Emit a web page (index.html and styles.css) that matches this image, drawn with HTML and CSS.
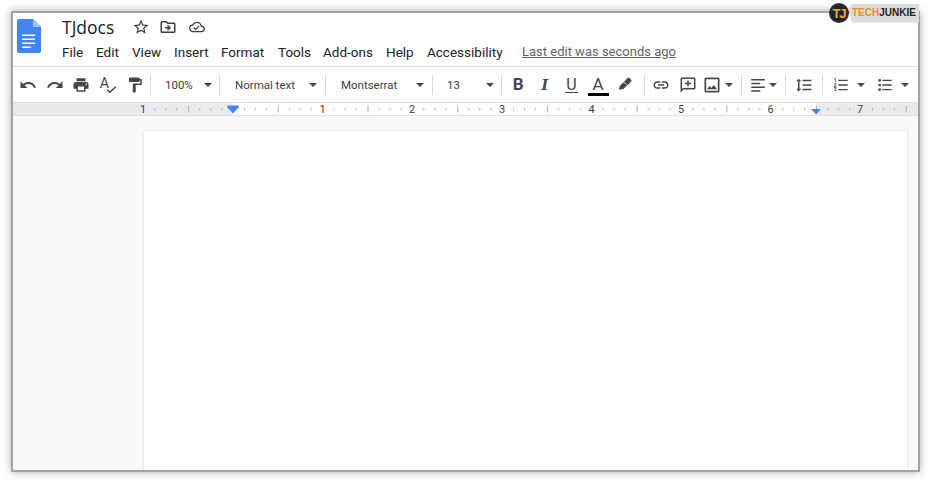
FILE: index.html
```html
<!DOCTYPE html>
<html lang="en">
<head>
<meta charset="utf-8">
<title>TJdocs</title>
<link rel="stylesheet" href="styles.css">
</head>
<body>
<div class="frame">
  <div class="badge">
    <div class="badge-logo"><span>TJ</span></div>
    <div class="badge-tag"><span class="orange">TECH</span>JUNKIE</div>
  </div>
  <header class="header">
    <svg class="doc-icon" viewBox="0 0 24 34">
      <path fill="#4285f4" d="M2 0h14l8 8v24a2 2 0 0 1-2 2H2a2 2 0 0 1-2-2V2a2 2 0 0 1 2-2z"/>
      <path fill="#a1c2fa" d="M16 0l8 8h-8z"/>
      <path fill="#fff" d="M5 15.500h13V17H5zM5 19.500h13V21H5zM5 23.500h13V25H5zM5 27.500h9V29H5z"/>
    </svg>
    <div class="head-col">
      <div class="title-row">
        <span class="title">TJdocs</span>
        <svg class="ticon" viewBox="0 0 24 24"><path d="M22 9.240l-7.190-.62L12 2 9.190 8.630 2 9.240l5.460 4.730L5.820 21 12 17.270 18.180 21l-1.630-7.030L22 9.240zM12 15.400l-3.760 2.270 1-4.280-3.320-2.880 4.380-.38L12 6.100l1.710 4.040 4.380.38-3.320 2.880 1 4.280L12 15.400z"/></svg>
        <svg class="ticon ticon-folder" viewBox="0 0 24 24"><path d="M20 6h-8l-2-2H4c-1.100 0-2 .9-2 2v12c0 1.100.9 2 2 2h16c1.100 0 2-.9 2-2V8c0-1.100-.9-2-2-2zm0 12H4V6h5.170l2 2H20v10zm-8.010-9l-1.410 1.410L12.160 12H8v2h4.160l-1.590 1.590L11.990 17 16 13.010 11.990 9z"/></svg>
        <svg class="ticon ticon-cloud" viewBox="0 0 24 24"><path d="M19.350 10.040C18.670 6.590 15.640 4 12 4 9.110 4 6.600 5.640 5.350 8.040 2.340 8.360 0 10.910 0 14c0 3.310 2.690 6 6 6h13c2.760 0 5-2.240 5-5 0-2.640-2.050-4.780-4.650-4.960zM19 18H6c-2.210 0-4-1.790-4-4 0-2.050 1.530-3.760 3.560-3.970l1.070-.11.5-.95C8.080 7.140 9.940 6 12 6c2.620 0 4.880 1.860 5.390 4.430l.3 1.500 1.530.11c1.560.1 2.780 1.410 2.780 2.960 0 1.650-1.350 3-3 3zm-9-3.820l-2.090-2.090L6.500 13.500 10 17l6.010-6.010-1.410-1.410z"/></svg>
      </div>
      <nav class="menu">
        <span class="m-file">File</span>
        <span class="m-edit">Edit</span>
        <span class="m-view">View</span>
        <span class="m-insert">Insert</span>
        <span class="m-format">Format</span>
        <span class="m-tools">Tools</span>
        <span class="m-addons">Add-ons</span>
        <span class="m-help">Help</span>
        <span class="m-access">Accessibility</span>
        <span class="last-edit">Last edit was seconds ago</span>
      </nav>
    </div>
  </header>

  <div class="toolbar">
    <div class="btn"><svg class="icon" viewBox="0 0 24 24"><path d="M12.500 8c-2.650 0-5.050.99-6.900 2.600L2 7v9h9l-3.620-3.620c1.390-1.160 3.160-1.880 5.120-1.880 3.540 0 6.550 2.310 7.600 5.500l2.370-.78C21.080 11.030 17.150 8 12.500 8z"/></svg></div>
    <div class="btn"><svg class="icon" viewBox="0 0 24 24"><path d="M18.400 10.600C16.550 8.990 14.150 8 11.500 8c-4.650 0-8.580 3.030-9.960 7.220L3.900 16c1.050-3.190 4.050-5.500 7.600-5.500 1.950 0 3.730.72 5.120 1.880L13 16h9V7l-3.600 3.600z"/></svg></div>
    <div class="btn"><svg class="icon" viewBox="0 0 24 24"><path d="M19 8H5c-1.660 0-3 1.340-3 3v6h4v4h12v-4h4v-6c0-1.660-1.340-3-3-3zm-3 11H8v-5h8v5zm3-7c-.55 0-1-.45-1-1s.45-1 1-1 1 .45 1 1-.45 1-1 1zm-1-9H6v4h12V3z"/></svg></div>
    <div class="btn"><svg class="icon" viewBox="0 0 24 24"><text class="svg-letter" x="1" y="16" font-size="19">A</text><path d="M21.590 13.590l-7.090 6.590L11.830 17.500l-1.410 1.410 4.090 4.090L23 15z"/></svg></div>
    <div class="btn"><svg class="icon" viewBox="0 0 24 24"><path d="M18 4V3c0-.55-.45-1-1-1H5c-.55 0-1 .45-1 1v4c0 .55.45 1 1 1h12c.55 0 1-.45 1-1V6h1v4H9v11c0 .55.45 1 1 1h2c.55 0 1-.45 1-1v-9h8V4h-3z"/></svg></div>
    <div class="sep sep-first"></div>

    <div class="drop drop-zoom"><span>100%</span><i class="caret"></i></div>
    <div class="sep"></div>
    <div class="drop drop-style"><span>Normal text</span><i class="caret"></i></div>
    <div class="sep"></div>
    <div class="drop drop-font"><span>Montserrat</span><i class="caret"></i></div>
    <div class="sep"></div>
    <div class="drop drop-size"><span>13</span><i class="caret"></i></div>
    <div class="sep"></div>

    <div class="btn after-sep"><b class="fmt fmt-b">B</b></div>
    <div class="btn"><i class="fmt fmt-i">I</i></div>
    <div class="btn"><span class="fmt fmt-u">U</span></div>
    <div class="btn"><span class="fmt fmt-a">A</span></div>
    <div class="btn"><svg class="icon icon-hl" viewBox="0 0 24 24"><path d="M18.500 1.150c-.53 0-1.040.19-1.430.58l-5.810 5.820 5.650 5.650 5.820-5.810c.77-.78.77-2.040 0-2.830l-2.840-2.830c-.39-.39-.89-.58-1.390-.58zM10.300 8.500l-5.960 5.960c-.78.78-.78 2.040.02 2.850-1.220 1.230-2.360 2.360-2.360 2.360L6.630 20l.87-.87c.78.78 2.050.78 2.830 0l5.960-5.960L10.300 8.500z"/></svg></div>
    <div class="sep sep-hl"></div>

    <div class="btn after-sep"><svg class="icon" viewBox="0 0 24 24"><path d="M3.900 12c0-1.710 1.390-3.100 3.100-3.100h4V7H7c-2.760 0-5 2.240-5 5s2.240 5 5 5h4v-1.900H7c-1.710 0-3.100-1.390-3.100-3.100zM8 13h8v-2H8v2zm9-6h-4v1.900h4c1.710 0 3.100 1.390 3.100 3.100s-1.390 3.100-3.100 3.100h-4V17h4c2.760 0 5-2.240 5-5s-2.240-5-5-5z"/></svg></div>
    <div class="btn"><svg class="icon" viewBox="0 0 24 24"><path d="M20 2H4c-1.100 0-2 .9-2 2v18l4-4h14c1.100 0 2-.9 2-2V4c0-1.100-.9-2-2-2zm0 14H5.170L4 17.170V4h16v12zM11 14h2v-3h3V9h-3V6h-2v3H8v2h3z"/></svg></div>
    <div class="btn btn-narrow"><svg class="icon icon-img" viewBox="0 0 24 24"><path d="M19 5v14H5V5h14m0-2H5c-1.100 0-2 .9-2 2v14c0 1.100.9 2 2 2h14c1.100 0 2-.9 2-2V5c0-1.100-.9-2-2-2zm-4.860 8.860l-3 3.870L9 13.140 6 17h12l-3.860-5.140z"/></svg></div>
    <i class="caret caret-tight"></i>
    <div class="sep sep-img"></div>

    <div class="btn btn-narrow after-align"><svg class="icon" viewBox="0 0 24 24"><path d="M3 4h18v2H3zM3 9h12v2H3zM3 14h18v2H3zM3 19h12v2H3z"/></svg></div>
    <i class="caret"></i>
    <div class="sep sep-align"></div>

    <div class="btn after-align-sep"><svg class="icon" viewBox="0 0 24 24"><path d="M6 7h2.500L5 3.500 1.500 7H4v10H1.500L5 20.500 8.500 17H6V7zm4-2v2h12V5H10zm0 14h12v-2H10v2zm0-6h12v-2H10v2z"/></svg></div>
    <div class="sep sep-line"></div>

    <div class="btn after-line-sep"><svg class="icon icon-list" viewBox="0 0 24 24"><text class="svg-digit" x="1" y="7.500">1</text><text class="svg-digit" x="1" y="14.500">2</text><text class="svg-digit" x="1" y="21.500">3</text><path d="M8 4h14v2H8zM8 11h14v2H8zM8 18h14v2H8z"/></svg></div>
    <i class="caret caret-list"></i>
    <div class="btn after-num"><svg class="icon icon-list" viewBox="0 0 24 24"><circle cx="4" cy="5" r="2"/><circle cx="4" cy="12" r="2"/><circle cx="4" cy="19" r="2"/><path d="M8 4h14v2H8zM8 11h14v2H8zM8 18h14v2H8z"/></svg></div>
    <i class="caret caret-list"></i>
  </div>

  <svg class="ruler" viewBox="-1 0 905 12" width="905" height="12">
    <defs>
      <pattern id="ticks" x="129.300" y="0" width="89.700" height="12" patternUnits="userSpaceOnUse">
        <rect x="11" y="5" width="1" height="2.500" fill="#b4b8bc"/>
        <rect x="22" y="5" width="1" height="2.500" fill="#b4b8bc"/>
        <rect x="33" y="5" width="1" height="2.500" fill="#b4b8bc"/>
        <rect x="44.800" y="2.500" width="1" height="7" fill="#a8acb0"/>
        <rect x="56" y="5" width="1" height="2.500" fill="#b4b8bc"/>
        <rect x="67" y="5" width="1" height="2.500" fill="#b4b8bc"/>
        <rect x="78" y="5" width="1" height="2.500" fill="#b4b8bc"/>
      </pattern>
    </defs>
    <rect x="-1" width="905" height="12" fill="#fff"/>
    <rect x="-1" width="220" height="12" fill="#e8eaed"/>
    <rect x="802" width="102" height="12" fill="#e8eaed"/>
    <rect x="129" width="764" height="12" fill="url(#ticks)"/>
    <g class="ruler-nums">
      <text x="129" y="10">1</text>
      <text x="308.500" y="10">1</text>
      <text x="398" y="10">2</text>
      <text x="488" y="10">3</text>
      <text x="577.500" y="10">4</text>
      <text x="667" y="10">5</text>
      <text x="756.500" y="10">6</text>
      <text x="846" y="10">7</text>
    </g>
    <path fill="#4285f4" d="M213.500 2.500h11v3h-1l-4.500 5-4.500-5h-1z"/>
    <path fill="#4285f4" d="M797 6h10l-5 5.500z"/>
  </svg>

  <main class="canvas">
    <div class="page"></div>
  </main>
</div>
</body>
</html>
```

FILE: styles.css
```css
* { box-sizing: border-box; }

html, body {
  margin: 0;
  height: 100%;
  background: #fff;
  overflow: hidden;
}

body {
  font-family: Roboto, "Liberation Sans", sans-serif;
  color: #202124;
}

.frame {
  position: relative;
  display: flex;
  flex-direction: column;
  width: 909px;
  height: 461px;
  margin: 11px 0 0 11px;
  border: 2px solid #a2a2a2;
  background: #fff;
  box-shadow: 0 0 8px rgba(0, 0, 0, .32);
}

/* Watermark */
.badge {
  position: absolute;
  top: -10px;
  right: -1px;
  display: flex;
  align-items: center;
  height: 20px;
}

.badge-logo {
  position: relative;
  z-index: 1;
  display: flex;
  align-items: center;
  justify-content: center;
  width: 20px;
  height: 20px;
  border-radius: 50%;
  background: #20242a;
  border: 2px solid #2b2b2b;
}

.badge-logo span {
  color: #f2b01e;
  font: 700 13px/1 "Liberation Sans", sans-serif;
  letter-spacing: -1px;
}

.badge-tag {
  display: flex;
  align-items: center;
  width: 70px;
  height: 19px;
  padding-left: 3px;
  background: #dcdcdc;
  clip-path: polygon(3px 0, 100% 0, 100% 100%, 3px 100%, 0 50%);
  color: #1c1c1c;
  font: 700 10px/1 "Liberation Sans", sans-serif;
}

.orange { color: #ee8f0f; }

/* Header */
.header {
  display: flex;
  flex: none;
  height: 53px;
  border-bottom: 1px solid #e0e0e0;
  box-sizing: content-box;
}

.doc-icon {
  flex: none;
  width: 24px;
  height: 34px;
  margin: 6px 0 0 4px;
}

.head-col {
  margin-left: 21px;
  flex: 1;
}

.title-row {
  display: flex;
  align-items: center;
  height: 27px;
}

.title {
  width: 70px;
  font-family: "Open Sans", Roboto, sans-serif;
  font-size: 17.500px;
  color: #202124;
}

.ticon {
  width: 18px;
  height: 18px;
  margin-right: 9px;
  fill: #3c4043;
}

.ticon-folder { margin-right: 12px; }
.ticon-cloud { width: 16px; height: 16px; }

.menu {
  display: flex;
  align-items: center;
  height: 23px;
  font-size: 13.500px;
  white-space: nowrap;
  color: #202124;
}

.m-file { width: 34px; }
.m-edit { width: 36px; }
.m-view { width: 42px; }
.m-insert { width: 47px; }
.m-format { width: 57px; }
.m-tools { width: 45px; }
.m-addons { width: 63px; }
.m-help { width: 41px; }
.m-access { width: 95px; }

.last-edit {
  font-size: 13px;
  color: #5f6368;
  text-decoration: underline;
}

/* Toolbar */
.toolbar {
  display: flex;
  flex: none;
  align-items: center;
  height: 36px;
  padding-left: 2px;
  border-bottom: 1px solid #e0e0e0;
  color: #444746;
}

.btn {
  display: flex;
  flex: none;
  align-items: center;
  justify-content: center;
  width: 26.600px;
  height: 100%;
}

.btn-narrow { width: 22px; }

.icon {
  width: 18px;
  height: 18px;
  fill: #444746;
}

.icon-img { width: 20px; height: 20px; }
.icon-hl { width: 15px; height: 15px; }
.icon-list { width: 16px; height: 16px; }

.svg-letter {
  font-family: Roboto, sans-serif;
  fill: #444746;
}

.svg-digit {
  font: 700 7.500px Roboto, sans-serif;
  fill: #444746;
}

.sep {
  flex: none;
  width: 1px;
  height: 20px;
  background: #dadce0;
}

.sep-first { margin-left: 2px; }
.sep-hl { margin-left: 6px; }
.sep-img { margin-left: 8px; }
.sep-align { margin-left: 8px; }
.sep-line { margin-left: 4.400px; }

.after-sep { margin-left: 3px; }
.after-align { margin-left: 5px; }
.after-align-sep { margin-left: 4.700px; }
.after-line-sep { margin-left: 5px; }
.after-num { margin-left: 6px; }

.drop {
  display: flex;
  flex: none;
  align-items: center;
  justify-content: space-between;
  height: 100%;
  font-size: 11.500px;
  color: #3c4043;
}

.drop-zoom { width: 68px; padding: 0 7px 0 14px; }
.drop-style { width: 105px; padding: 0 8px 0 15px; }
.drop-font { width: 106px; padding: 0 8px 0 15px; }
.drop-size { width: 68px; padding: 0 7px 0 14px; }

.caret {
  flex: none;
  width: 0;
  height: 0;
  border-style: solid;
  border-width: 4px 4px 0;
  border-color: #444746 transparent transparent;
}

.caret-tight { margin-left: 2px; }
.caret-list { margin-left: 3px; }

.fmt {
  color: #444746;
  line-height: 1;
}

.fmt-b {
  font-size: 17px;
  font-weight: 700;
}

.fmt-i {
  font-family: "DejaVu Serif", serif;
  font-size: 14px;
  font-weight: 700;
}

.fmt-u {
  padding: 0 1px;
  border-bottom: 1.500px solid #444746;
  font-size: 16px;
  line-height: 15px;
}

.fmt-a {
  display: block;
  width: 21px;
  margin-top: 3px;
  border-bottom: 3px solid #000;
  font-size: 17px;
  line-height: 17px;
  text-align: center;
}

/* Ruler */
.ruler {
  display: block;
  flex: none;
}

.ruler-nums text {
  font: 11px Roboto, sans-serif;
  fill: #3c4043;
  text-anchor: middle;
}

/* Document canvas */
.canvas {
  flex: 1;
  min-height: 0;
  overflow: hidden;
  padding: 15px 0 0 131px;
  background: #f8f9fa;
  border-top: 1px solid #e0e0e0;
}

.page {
  width: 763px;
  height: 400px;
  background: #fff;
  box-shadow: 0 0 3px rgba(60, 64, 67, .18);
}
```
